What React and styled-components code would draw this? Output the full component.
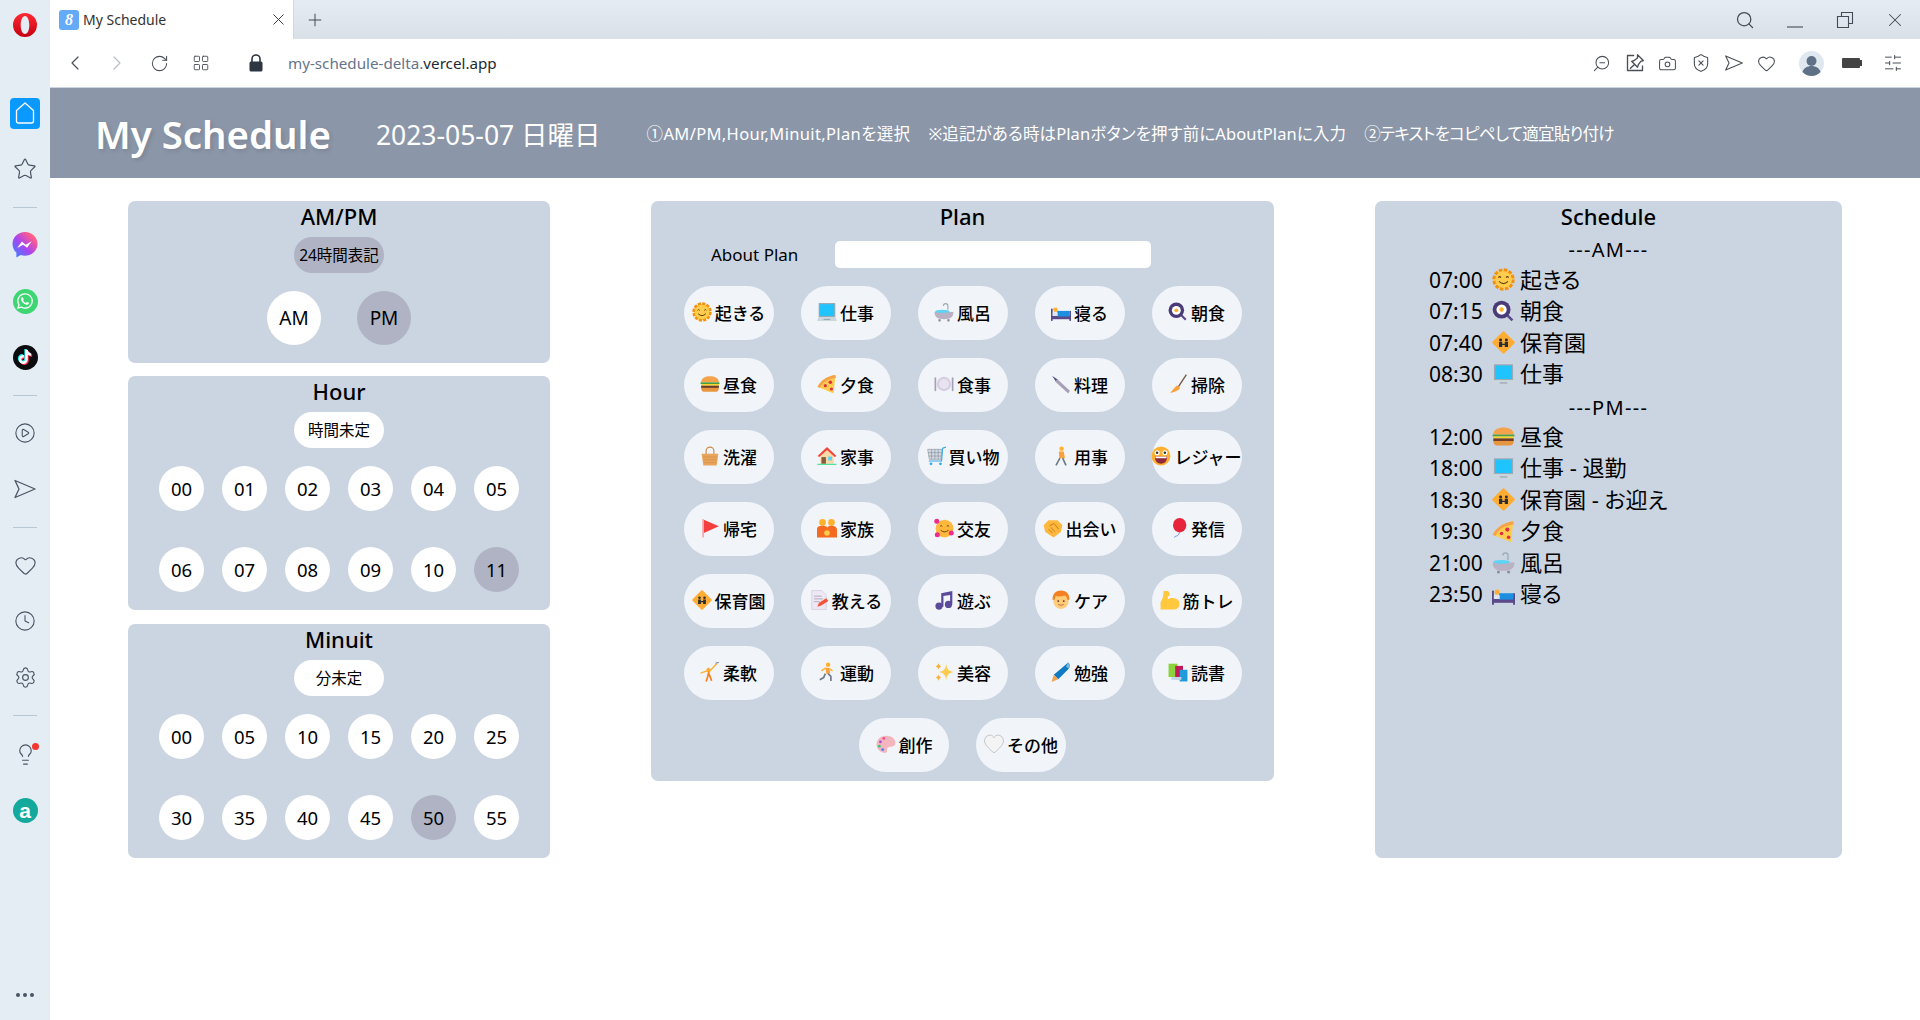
import React from 'react';
import styled, { createGlobalStyle } from 'styled-components';
import {
  X, Plus, ChevronLeft, ChevronRight, RotateCw, LayoutGrid, Search, Star, CirclePlay, Heart,
  Clock, Settings, Lightbulb, ZoomOut, Camera, ShieldX, SlidersHorizontal,
} from 'lucide-react';
import { FaWhatsapp, FaTiktok } from 'react-icons/fa';

const SANS = '"Noto Sans", "Noto Sans CJK JP", sans-serif';

const GlobalStyle = createGlobalStyle`
  html, body { margin: 0; padding: 0; height: 100%; overflow: hidden; background: #fff; }
  #root { height: 100%; }
  * { box-sizing: border-box; }
  body { font-family: ${SANS}; color: #000; font-feature-settings: "palt"; }
  button { font-feature-settings: "palt"; }
`;

const Browser = styled.div`
  display: flex;
  height: 1020px;
`;

const Sidebar = styled.aside`
  width: 50px;
  flex: none;
  background: #e4ecf4;
  display: flex;
  flex-direction: column;
  align-items: center;
  padding-bottom: 12px;
  color: #4a5563;
`;

const LogoSlot = styled.div`
  height: 50px;
  margin-bottom: 35px;
  display: flex;
  align-items: center;
  justify-content: center;
`;

const SideSlot = styled.div`
  position: relative;
  width: 50px;
  height: 56px;
  flex: none;
  display: flex;
  align-items: center;
  justify-content: center;
`;

const HomeTile = styled.div`
  width: 30px;
  height: 31px;
  border-radius: 4px;
  background: #0a9aff;
  display: flex;
  align-items: center;
  justify-content: center;
`;

const SideRule = styled.div`
  height: ${(p) => (p.$tall ? '21px' : '20px')};
  width: 24px;
  flex: none;
  display: flex;
  align-items: center;
  &::before {
    content: '';
    width: 100%;
    height: 1px;
    background: #b9c6d4;
  }
`;

const Badge = styled.span`
  position: absolute;
  top: 17px;
  left: 32px;
  width: 7px;
  height: 7px;
  border-radius: 50%;
  background: #f5372f;
`;

const AppDisc = styled.div`
  width: 25px;
  height: 25px;
  border-radius: 50%;
  display: flex;
  align-items: center;
  justify-content: center;
  color: #fff;
  background: ${(p) => p.$bg};
`;

const TikTokMark = styled(FaTiktok)`
  filter: drop-shadow(-1px -1px 0 #25f4ee) drop-shadow(1px 1px 0 #fe2c55);
`;

const AmazonLetter = styled.span`
  font: 700 21px/21px "Liberation Sans", sans-serif;
  color: #fff;
`;

const Dots = styled.div`
  margin-top: auto;
  display: flex;
  gap: 3px;
  padding-bottom: 11px;
`;

const Dot = styled.span`
  width: 4px;
  height: 4px;
  border-radius: 50%;
  background: #4a5563;
`;

const Main = styled.div`
  flex: 1;
  min-width: 0;
  display: flex;
  flex-direction: column;
`;

const TabBar = styled.div`
  height: 39px;
  flex: none;
  display: flex;
  align-items: center;
  background: linear-gradient(#e5ecf4, #d9e0e8);
  color: #444b55;
`;

const Tab = styled.div`
  width: 244px;
  height: 39px;
  background: #fff;
  display: flex;
  align-items: center;
  padding: 0 5px 0 9px;
  border-right: 1px solid #cdd8e4;
  color: #333;
  font-size: 14px;
`;

const Favicon = styled.span`
  width: 20px;
  height: 20px;
  margin-right: 4px;
  border-radius: 3px;
  background: #64aaf6;
  color: #fff;
  display: flex;
  align-items: center;
  justify-content: center;
  font: italic 700 16px/20px "Liberation Serif", serif;
`;

const TabTitle = styled.span`
  flex: 1;
`;

const NewTab = styled.div`
  width: 42px;
  display: flex;
  justify-content: center;
`;

const WindowControls = styled.div`
  margin-left: auto;
  display: flex;
`;

const WindowButton = styled.div`
  width: 50px;
  height: 39px;
  display: flex;
  align-items: center;
  justify-content: center;
`;

const AddressBar = styled.div`
  height: 49px;
  flex: none;
  display: flex;
  align-items: center;
  padding: 0 17px 0 4px;
  background: #fff;
  border-bottom: 1px solid #cbd5e1;
  color: #4a4f57;
`;

const NavButton = styled.div`
  width: 42px;
  height: 42px;
  display: flex;
  align-items: center;
  justify-content: center;
  color: ${(p) => (p.$off ? '#b8bec6' : '#4a4f57')};
`;

const LockSlot = styled.div`
  margin: 0 24px 0 26px;
  display: flex;
  color: #2c3540;
`;

const Url = styled.div`
  font-size: 15.2px;
  color: #64748b;
`;

const UrlHost = styled.span`
  color: #1f2933;
`;

const ToolGroup = styled.div`
  margin-left: auto;
  display: flex;
  align-items: center;
`;

const ToolButton = styled.div`
  width: 33px;
  height: 33px;
  display: flex;
  align-items: center;
  justify-content: center;
`;

const Mirrored = styled.span`
  display: flex;
  transform: scaleX(-1);
`;

const Avatar = styled.div`
  width: 25px;
  height: 25px;
  margin: 0 18px 0 16px;
  display: flex;
`;

const BatteryBody = styled.div`
  width: 18px;
  height: 10px;
  border-radius: 1px;
  background: #444;
`;

const BatteryNib = styled.div`
  width: 2px;
  height: 6px;
  background: #444;
  margin-right: 21px;
`;

const Header = styled.header`
  height: 90px;
  flex: none;
  display: flex;
  align-items: center;
  padding-left: 45px;
  background: #8b96a8;
  color: #fff;
`;

const Title = styled.h1`
  margin: 2px 45px 0 0;
  font-size: 38.4px;
  font-weight: 600;
  text-shadow: 2px 2px 4px rgba(0, 0, 0, 0.12);
`;

const DateText = styled.div`
  margin-right: 46px;
  font-size: 26.5px;
`;

const Notes = styled.div`
  display: flex;
  gap: 18px;
  font-size: 16.5px;
`;

const Note = styled.span`
  letter-spacing: ${(p) => p.$track}px;
`;

const Content = styled.main`
  display: flex;
  align-items: flex-start;
  justify-content: space-between;
  padding: 23px 78px 0;
`;

const LeftColumn = styled.div`
  width: 422px;
  display: flex;
  flex-direction: column;
  gap: 13px;
  & > section:last-child {
    margin-top: 1px;
  }
`;

const Panel = styled.section`
  background: #cbd5e1;
  border-radius: 7px;
  display: flex;
  flex-direction: column;
  align-items: center;
  padding-bottom: 18px;
`;

const PlanPanel = styled(Panel)`
  width: 623px;
  padding-bottom: 9px;
`;

const SchedulePanel = styled(Panel)`
  width: 467px;
  height: 657px;
`;

const PanelTitle = styled.h2`
  margin: 0;
  height: 36px;
  padding-bottom: 5px;
  font-size: 22px;
  line-height: 31px;
  font-weight: 500;
`;

const Pill = styled.button`
  width: 90px;
  height: 36px;
  margin-bottom: 18px;
  padding: 0 0 1px;
  border: none;
  border-radius: 18px;
  font: 15.500px ${SANS};
  color: #000;
  background: ${(p) => (p.$active ? '#afb3c3' : '#fff')};
`;

const MeridiemRow = styled.div`
  display: flex;
  gap: 36px;
`;

const Meridiem = styled.button`
  width: 54px;
  height: 54px;
  padding: 0;
  border: none;
  border-radius: 50%;
  font: 19px ${SANS};
  color: #000;
  background: ${(p) => (p.$active ? '#afb3c3' : '#fff')};
`;

const NumberGrid = styled.div`
  display: grid;
  grid-template-columns: repeat(6, 45px);
  gap: 36px 18px;
`;

const NumberButton = styled.button`
  width: 45px;
  height: 45px;
  padding: 0;
  border: none;
  border-radius: 50%;
  font: 18.5px ${SANS};
  color: #000;
  background: ${(p) => (p.$active ? '#afb3c3' : '#fff')};
`;

const AboutRow = styled.label`
  align-self: stretch;
  display: flex;
  align-items: center;
  gap: 37px;
  padding: 4px 0 0 60px;
  font-size: 17px;
  line-height: 27px;
`;

const AboutInput = styled.input`
  width: 316px;
  height: 27px;
  border: none;
  border-radius: 5px;
  background: #fff;
  outline: none;
`;

const PlanGrid = styled.div`
  align-self: flex-start;
  display: flex;
  flex-wrap: wrap;
  justify-content: center;
  gap: 18px 27px;
  width: 559px;
  margin: 18px 0 0 32px;
`;

const PlanButton = styled.button`
  width: 90px;
  height: 54px;
  padding: 0 0 2px;
  border: none;
  border-radius: 27px;
  background: #f1f5f9;
  display: flex;
  align-items: center;
  justify-content: center;
  gap: 3px;
  font: 500 17px ${SANS};
  color: #000;
  white-space: nowrap;
`;

const EmojiSvg = styled.svg`
  flex: none;
  width: ${(p) => p.$size}px;
  height: ${(p) => p.$size}px;
`;

const Marker = styled.div`
  font-size: 20px;
  line-height: 27px;
  letter-spacing: 1.3px;
  margin-top: ${(p) => (p.$late ? '4px' : '-1px')};
  margin-bottom: ${(p) => (p.$late ? '0' : '1px')};
`;

const ScheduleList = styled.div`
  align-self: stretch;
  padding-left: 54px;
`;

const ScheduleRow = styled.div`
  display: flex;
  align-items: center;
  height: 31.5px;
  font-size: 21px;
`;

const RowTime = styled.span`
  width: 63px;
`;

const RowLabel = styled.span`
  margin-left: 5px;
  padding-bottom: 4px;
  font-size: 22px;
`;

const emoji = {
  sun: <><circle cx="18" cy="18" r="15" fill="#FFCC4D" stroke="#F4900C" strokeWidth="5" strokeDasharray="5.500 2.350" /><circle cx="18" cy="18" r="13" fill="#FFCC4D" /><path d="M10 15q2-3 4 0M22 15q2-3 4 0M11 21q7 7 14 0" fill="none" stroke="#664500" strokeWidth="1.8" /></>,
  laptop: <><rect x="3" y="2" width="30" height="25" rx="1" fill="#9AAAB4" /><rect x="5" y="4" width="26" height="21" fill="#1FC4FF" /><path d="M3 27h30l3 7H0z" fill="#CCD6DD" /><rect x="12" y="30.500" width="12" height="1.500" fill="#8899A6" /></>,
  bath: <><path d="M25 14V7a4 4 0 0 0-8 0" fill="none" stroke="#9AAAB4" strokeWidth="2" /><path d="M1 18h34c0 9-5 13-17 13S1 27 1 18z" fill="#B9B2C4" /><ellipse cx="15" cy="17" rx="13" ry="3" fill="#5DD3F5" /><rect x="8" y="31" width="4" height="4" fill="#8E8799" /><rect x="24" y="31" width="4" height="4" fill="#8E8799" /></>,
  bed: <><rect x="0" y="12" width="3" height="22" fill="#5B4A8A" /><rect x="33" y="16" width="3" height="18" fill="#5B4A8A" /><rect x="1" y="25" width="34" height="6" fill="#5B4A8A" /><path d="M11 16h22v10H11z" fill="#1C8FE0" /><rect x="3" y="19" width="9" height="6" fill="#DDE6EE" /><circle cx="8" cy="14" r="4" fill="#FFB02E" /></>,
  pan: <><path d="m24 24 8 8" stroke="#5B4A8A" strokeWidth="4" /><circle cx="15" cy="15" r="14" fill="#4B3A78" /><circle cx="15" cy="15" r="8" fill="#fff" /><circle cx="15" cy="15" r="3.500" fill="#FFB02E" /></>,
  burger: <><path d="M2 15C2 7 10 4 18 4s16 3 16 11z" fill="#F4A24B" /><rect x="1" y="15" width="34" height="3" fill="#4A9D3B" /><rect x="2" y="18" width="32" height="3" fill="#F8D22E" /><rect x="2" y="21" width="32" height="4" fill="#6D3B22" /><path d="M2 25h32c0 5-3 7-6 7H8c-3 0-6-2-6-7z" fill="#E8953F" /></>,
  pizza: <><path d="M33 2C18 4 7 12 1 23l29 12z" fill="#FFCC4D" /><path d="M33 2C18 4 7 12 1 23l4 2C11 14 19 9 34 7z" fill="#F4A24B" /><circle cx="24" cy="15" r="3.200" fill="#DD2E44" /><circle cx="15" cy="21" r="2.800" fill="#DD2E44" /><circle cx="26" cy="27" r="2.800" fill="#DD2E44" /></>,
  plate: <><circle cx="18" cy="18" r="13" fill="#D6CFE2" /><circle cx="18" cy="18" r="9" fill="#E8E3F0" /><rect x="1" y="6" width="3" height="25" rx="1.500" fill="#A79FB5" /><rect x="32" y="6" width="3" height="25" rx="1.500" fill="#A79FB5" /></>,
  knife: <><path d="M2 3 12 10l-3 4z" fill="#5B4A8A" /><path d="m11 9 23 21-3 5L8 14z" fill="#A79FB5" /></>,
  broom: <><path d="m33 1-15 23" stroke="#7A5B45" strokeWidth="2.500" /><path d="M15 21c5 0 7 3 6 6-4 3-9 6-17 7 2-3 7-8 11-13z" fill="#F9A23B" /></>,
  basket: <><path d="M11 15V9a7 7 0 0 1 14 0v6" fill="none" stroke="#C98A45" strokeWidth="2" /><path d="M3 14h30l-3 21H6z" fill="#E8A55B" /><path d="M5 20h26M6 25h24M7 30h22" stroke="#C98A45" /></>,
  house: <><path d="M6 16 18 5l12 11v16H6z" fill="#F9D9A8" /><path d="M18 2 1 18l3 2L18 7l14 13 3-2z" fill="#F44336" /><rect x="8" y="20" width="8" height="12" fill="#8A5A3C" /><rect x="20" y="19" width="7" height="7" fill="#5DD3F5" /><rect x="1" y="32" width="34" height="2" fill="#3EE08F" /></>,
  cart: <><path d="M3 6h26l-2 18H6z" fill="#D3D9E0" stroke="#7D8894" /><path d="M10 6v18M16 6v18M22 6v18M4 12h24M5 18h22" stroke="#7D8894" /><path d="m36 2-6 2-2 23H5" fill="none" stroke="#3AA7E0" strokeWidth="2" /><circle cx="9" cy="32" r="2.500" fill="#3AA7E0" /><circle cx="26" cy="32" r="2.500" fill="#3AA7E0" /></>,
  walk: <><circle cx="19" cy="5" r="4" fill="#FFB02E" /><path d="M14 10h9l2 12h-10z" fill="#F9A23B" /><path d="m16 22-7 13M21 22l6 13" stroke="#6D7B8A" strokeWidth="3" /></>,
  grin: <><circle cx="18" cy="18" r="17" fill="#FFB02E" /><circle cx="11" cy="12" r="4.500" fill="#fff" /><circle cx="25" cy="12" r="4.500" fill="#fff" /><circle cx="11" cy="12" r="2.200" fill="#333" /><circle cx="25" cy="12" r="2.200" fill="#333" /><path d="M7 19h22c0 9-5 13-11 13S7 28 7 19z" fill="#8F2A3C" /><rect x="8" y="19" width="20" height="3" fill="#fff" /></>,
  flag: <><rect x="4" y="2" width="3" height="33" fill="#F4A8A8" /><path d="M7 3 34 15 7 27z" fill="#F43F3F" /></>,
  family: <><circle cx="10" cy="8" r="6" fill="#FFB02E" /><circle cx="26" cy="8" r="6" fill="#FFB02E" /><path d="M0 35V20q0-6 10-6t8 6q0-6 8-6t10 6v15z" fill="#F46A1F" /><circle cx="18" cy="27" r="5" fill="#FFCC4D" /></>,
  hearts: <><circle cx="19" cy="19" r="16" fill="#FFB83D" /><path d="M11 15q2-3 4 0M23 15q2-3 4 0M12 22q7 6 14 0" fill="none" stroke="#664500" strokeWidth="1.800" /><circle cx="5" cy="6" r="4.500" fill="#EF2C8B" /><circle cx="31" cy="27" r="4.500" fill="#EF2C8B" /><circle cx="6" cy="30" r="4.500" fill="#EF2C8B" /></>,
  shake: <><path d="M1 13 10 4h16l9 9-3 12-13 10L4 25z" fill="#FFB83D" /><path d="m12 14 8-4 8 10M10 20l7 7M14 17l8 8" fill="none" stroke="#C47F12" strokeWidth="1.800" /></>,
  balloon: <><ellipse cx="21" cy="13" rx="12" ry="13" fill="#E8243C" /><path d="m21 26-2 4c-2 3-6 2-8 5" fill="none" stroke="#5C7CE0" strokeWidth="1.500" /></>,
  school: <><rect x="5" y="5" width="26" height="26" rx="2" transform="rotate(45 18 18)" fill="#FFAC33" /><circle cx="13.500" cy="14" r="2.300" fill="#292F33" /><circle cx="22.500" cy="14" r="2.300" fill="#292F33" /><path d="M11 17h5v8h-5zM20 17h5v8h-5zM14 20h8v2h-8z" fill="#292F33" /></>,
  memo: <><path d="M5 1h18l8 8v26H5z" fill="#EEE8F4" stroke="#C9BFD6" /><path d="M9 11h14M9 16h16M9 21h10" stroke="#A79FB5" strokeWidth="1.500" /><path d="m15 30 3-7 13-8 4 5-13 8z" fill="#F4553A" /></>,
  music: <><path d="M13 6 33 2v24h-4V9l-12 2v19h-4z" fill="#5B4A9A" /><circle cx="9" cy="29" r="6.500" fill="#5B4A9A" /><circle cx="26" cy="26" r="6.500" fill="#5B4A9A" /></>,
  face: <><circle cx="18" cy="20" r="14" fill="#FFCC7A" /><path d="M3 18C2 6 10 1 18 1s16 5 15 17l-4-1c0-4-2-6-5-7-5 2-13 2-16 1-1 2-1 4-1 6z" fill="#F4801F" /><circle cx="13" cy="20" r="1.700" fill="#60352A" /><circle cx="23" cy="20" r="1.700" fill="#60352A" /><path d="M13 26q5 3 10 0" fill="none" stroke="#B5603A" strokeWidth="1.500" /></>,
  muscle: <><path d="M1 35V22C5 16 7 8 6 2h9l3 7-4 3v5c6-4 16-3 20 3 3 8-1 15-8 15z" fill="#FFC83D" /></>,
  cartwheel: <><circle cx="15" cy="14" r="3.500" fill="#FFB02E" /><path d="M1 20 13 16l3 2 14-15" fill="none" stroke="#FFB02E" strokeWidth="2.500" /><path d="M16 17 14 26l-3 9M16 21l5 13" stroke="#F4801F" strokeWidth="3" /><path d="M28 2 34 1" stroke="#7D8894" strokeWidth="2" /></>,
  runner: <><circle cx="20" cy="5" r="4" fill="#FFB02E" /><path d="m15 10 7 1 2 9-7 2z" fill="#F9A23B" /><path d="m15 21-3 7-7 4M20 21l5 5v8" fill="none" stroke="#6D7B8A" strokeWidth="3" /><path d="m15 11-7 5M22 12l6 4" stroke="#FFB02E" strokeWidth="2.500" /></>,
  sparkle: <><path d="M22 3c1 9 4 13 13 15-9 2-12 6-13 15-1-9-4-13-13-15 9-2 12-6 13-15z" fill="#FFCC4D" /><path d="M8 2c.5 3 2 5 5 6-3 1-4.500 3-5 6-.5-3-2-5-5-6 3-1 4.500-3 5-6zM8 22c.5 3 2 5 5 6-3 1-4.500 3-5 6-.5-3-2-5-5-6 3-1 4.500-3 5-6z" fill="#FFAC33" /></>,
  pen: <><path d="M31 1c4 3 3 8 1 11L13 31l-8-8z" fill="#0F7BC4" /><path d="m5 23 8 8-12 5z" fill="#F4A24B" /><path d="M31 1c4 3 3 8 1 11l-5-4z" fill="#7DB7DE" /></>,
  books: <><rect x="1" y="3" width="16" height="24" fill="#8CD23C" /><rect x="13" y="7" width="14" height="24" fill="#C2185B" /><rect x="21" y="14" width="14" height="21" fill="#1E9BD8" /><rect x="6" y="27" width="18" height="5" fill="#BFD7E8" /></>,
  palette: <><path d="M18 3C8 3 1 10 1 19s8 15 15 15c5 0 4-5 4-7s2-4 6-4c6 0 9-3 9-7C35 8 28 3 18 3z" fill="#F4B6BE" /><circle cx="8" cy="14" r="2.500" fill="#A64DD6" /><circle cx="6" cy="22" r="2.500" fill="#3EC46D" /><circle cx="12" cy="28" r="2.500" fill="#3B82F6" /><circle cx="14" cy="8" r="2.500" fill="#F4508B" /></>,
  white: <><path d="M18 34C8 26 1 19 1 12 1 6 6 2 11 2c3 0 6 2 7 5 1-3 4-5 7-5 5 0 10 4 10 10 0 7-7 14-17 22z" fill="#F4F4F4" stroke="#B8BCC2" strokeWidth="1.500" /></>,
};

const Emoji = ({ name, size }) => (
  <EmojiSvg $size={size} viewBox="0 0 36 36">{emoji[name]}</EmojiSvg>
);

const plans = [
  ['sun', '起きる'], ['laptop', '仕事'], ['bath', '風呂'], ['bed', '寝る'], ['pan', '朝食'],
  ['burger', '昼食'], ['pizza', '夕食'], ['plate', '食事'], ['knife', '料理'], ['broom', '掃除'],
  ['basket', '洗濯'], ['house', '家事'], ['cart', '買い物'], ['walk', '用事'], ['grin', 'レジャー'],
  ['flag', '帰宅'], ['family', '家族'], ['hearts', '交友'], ['shake', '出会い'], ['balloon', '発信'],
  ['school', '保育園'], ['memo', '教える'], ['music', '遊ぶ'], ['face', 'ケア'], ['muscle', '筋トレ'],
  ['cartwheel', '柔軟'], ['runner', '運動'], ['sparkle', '美容'], ['pen', '勉強'], ['books', '読書'],
  ['palette', '創作'], ['white', 'その他'],
];

const amRows = [
  ['07:00', 'sun', '起きる'],
  ['07:15', 'pan', '朝食'],
  ['07:40', 'school', '保育園'],
  ['08:30', 'laptop', '仕事'],
];

const pmRows = [
  ['12:00', 'burger', '昼食'],
  ['18:00', 'laptop', '仕事 - 退勤'],
  ['18:30', 'school', '保育園 - お迎え'],
  ['19:30', 'pizza', '夕食'],
  ['21:00', 'bath', '風呂'],
  ['23:50', 'bed', '寝る'],
];

const hours = ['00', '01', '02', '03', '04', '05', '06', '07', '08', '09', '10', '11'];
const minutes = ['00', '05', '10', '15', '20', '25', '30', '35', '40', '45', '50', '55'];

const SendIcon = ({ size }) => (
  <svg width={size} height={size} viewBox="0 0 24 24" fill="none" stroke="currentColor" strokeWidth="1.3" strokeLinejoin="round">
    <path d="M2 3.500 22 12 2 20.500 6 12z" />
  </svg>
);

const OperaLogo = () => (
  <svg width="26" height="26" viewBox="0 0 26 26">
    <defs>
      <linearGradient id="opera" x1="0" y1="0" x2="0" y2="1">
        <stop offset="0" stopColor="#ff2a35" />
        <stop offset="1" stopColor="#c5000f" />
      </linearGradient>
    </defs>
    <path fillRule="evenodd" fill="url(#opera)" d="M13 1a12 12 0 1 0 0 24 12 12 0 0 0 0-24zm0 3c2.600 0 4.300 4 4.300 9s-1.700 9-4.300 9-4.300-4-4.300-9 1.700-9 4.300-9z" />
  </svg>
);

const MessengerIcon = () => (
  <svg width="26" height="26" viewBox="0 0 25 25">
    <defs>
      <linearGradient id="msgr" x1="0" y1="1" x2="1" y2="0">
        <stop offset="0" stopColor="#2e8bff" />
        <stop offset="0.45" stopColor="#a845f0" />
        <stop offset="0.8" stopColor="#ff5c8a" />
        <stop offset="1" stopColor="#ff8a5c" />
      </linearGradient>
    </defs>
    <path fill="url(#msgr)" d="M12.500 0C5.700 0 .5 5 .5 11.500c0 3.400 1.400 6.300 3.700 8.300v4.700l4.200-2.300c1.300.4 2.700.6 4.100.6 6.800 0 12-5 12-11.300S19.300 0 12.500 0z" />
    <path fill="#fff" d="m5 15.500 4.500-6.300 3.700 3 5.800-3.300-4.500 6.300-3.700-3z" />
  </svg>
);

const LockIcon = () => (
  <svg width="16" height="18" viewBox="0 0 16 18">
    <path d="M4 8V5a4 4 0 0 1 8 0v3" fill="none" stroke="currentColor" strokeWidth="1.600" />
    <rect x="1.500" y="7.500" width="13" height="10" rx="1.500" fill="currentColor" />
  </svg>
);

const SnapIcon = () => (
  <svg width="20" height="20" viewBox="0 0 24 24" fill="none" stroke="currentColor" strokeWidth="1.600" strokeLinejoin="round">
    <path d="M11 3H3v18h18v-6" />
    <path d="m15 2 7 7-3 1-3 4-1 3-7-7 3-1 4-3zM11 14l-5 5" />
  </svg>
);

const AvatarIcon = () => (
  <svg width="25" height="25" viewBox="0 0 25 25">
    <circle cx="12.500" cy="12.500" r="12.500" fill="#dfe7f0" />
    <circle cx="12.500" cy="10" r="5" fill="#5f7186" />
    <path d="M3.500 21c1-4 5-6 9-6s8 2 9 6c-2.500 2.500-5.500 4-9 4s-6.500-1.500-9-4z" fill="#5f7186" />
  </svg>
);

const HomeIcon = () => (
  <svg width="22" height="24" viewBox="0 0 22 24" fill="none" stroke="#fff" strokeWidth="1.300" strokeLinejoin="round">
    <path d="M11 2 2.500 9.500V20a2 2 0 0 0 2 2h13a2 2 0 0 0 2-2V9.500z" />
  </svg>
);

const NumberPanel = ({ title, pill, values, active }) => (
  <Panel>
    <PanelTitle>{title}</PanelTitle>
    <Pill>{pill}</Pill>
    <NumberGrid>
      {values.map((v) => (
        <NumberButton key={v} $active={v === active}>{v}</NumberButton>
      ))}
    </NumberGrid>
  </Panel>
);

const Rows = ({ rows }) => (
  <ScheduleList>
    {rows.map(([time, icon, label]) => (
      <ScheduleRow key={time}>
        <RowTime>{time}</RowTime>
        <Emoji name={icon} size={23} />
        <RowLabel>{label}</RowLabel>
      </ScheduleRow>
    ))}
  </ScheduleList>
);

export default function App() {
  return (
    <Browser>
      <GlobalStyle />
      <Sidebar>
        <LogoSlot><OperaLogo /></LogoSlot>
        <SideSlot><HomeTile><HomeIcon /></HomeTile></SideSlot>
        <SideSlot><Star size={24} strokeWidth={1.2} /></SideSlot>
        <SideRule />
        <SideSlot><MessengerIcon /></SideSlot>
        <SideSlot><AppDisc $bg="#3dd672"><FaWhatsapp size={18} /></AppDisc></SideSlot>
        <SideSlot><AppDisc $bg="#0b0b0f"><TikTokMark size={14} /></AppDisc></SideSlot>
        <SideRule />
        <SideSlot><CirclePlay size={22} strokeWidth={1.2} /></SideSlot>
        <SideSlot><SendIcon size={24} /></SideSlot>
        <SideRule />
        <SideSlot><Heart size={23} strokeWidth={1.2} /></SideSlot>
        <SideSlot><Clock size={22} strokeWidth={1.2} /></SideSlot>
        <SideSlot><Settings size={23} strokeWidth={1.2} /></SideSlot>
        <SideRule $tall />
        <SideSlot><Lightbulb size={23} strokeWidth={1.2} /><Badge /></SideSlot>
        <SideSlot><AppDisc $bg="#13a99c"><AmazonLetter>a</AmazonLetter></AppDisc></SideSlot>
        <Dots><Dot /><Dot /><Dot /></Dots>
      </Sidebar>
      <Main>
        <TabBar>
          <Tab>
            <Favicon>8</Favicon>
            <TabTitle>My Schedule</TabTitle>
            <X size={19} strokeWidth={1.2} />
          </Tab>
          <NewTab><Plus size={20} strokeWidth={1.2} /></NewTab>
          <WindowControls>
            <WindowButton><Search size={20} strokeWidth={1.5} /></WindowButton>
            <WindowButton><svg width="18" height="18" viewBox="0 0 18 18" stroke="currentColor" strokeWidth="1.100"><path d="M1 16h16" /></svg></WindowButton>
            <WindowButton><svg width="18" height="18" viewBox="0 0 18 18" fill="none" stroke="currentColor" strokeWidth="1.100"><path d="M1.500 5.500h11v11h-11zM5.500 5V1.500h11v11H13" /></svg></WindowButton>
            <WindowButton><X size={22} strokeWidth={1.1} /></WindowButton>
          </WindowControls>
        </TabBar>
        <AddressBar>
          <NavButton><ChevronLeft size={24} strokeWidth={1.2} /></NavButton>
          <NavButton $off><ChevronRight size={24} strokeWidth={1.2} /></NavButton>
          <NavButton><RotateCw size={19} strokeWidth={1.3} /></NavButton>
          <NavButton><LayoutGrid size={18} strokeWidth={1.2} /></NavButton>
          <LockSlot><LockIcon /></LockSlot>
          <Url>my-schedule-delta.<UrlHost>vercel.app</UrlHost></Url>
          <ToolGroup>
            <ToolButton><Mirrored><ZoomOut size={19} strokeWidth={1.3} /></Mirrored></ToolButton>
            <ToolButton><SnapIcon /></ToolButton>
            <ToolButton><Camera size={19} strokeWidth={1.3} /></ToolButton>
            <ToolButton><ShieldX size={20} strokeWidth={1.3} /></ToolButton>
            <ToolButton><SendIcon size={20} /></ToolButton>
            <ToolButton><Heart size={19} strokeWidth={1.3} /></ToolButton>
            <Avatar><AvatarIcon /></Avatar>
            <BatteryBody />
            <BatteryNib />
            <SlidersHorizontal size={20} strokeWidth={1.2} />
          </ToolGroup>
        </AddressBar>
        <Header>
          <Title>My Schedule</Title>
          <DateText>2023-05-07 日曜日</DateText>
          <Notes>
            <Note $track={0.35}>①AM/PM,Hour,Minuit,Planを選択</Note>
            <Note $track={0.12}>※追記がある時はPlanボタンを押す前にAboutPlanに入力</Note>
            <Note $track={-0.7}>②テキストをコピペして適宜貼り付け</Note>
          </Notes>
        </Header>
        <Content>
          <LeftColumn>
            <Panel>
              <PanelTitle>AM/PM</PanelTitle>
              <Pill $active>24時間表記</Pill>
              <MeridiemRow>
                <Meridiem>AM</Meridiem>
                <Meridiem $active>PM</Meridiem>
              </MeridiemRow>
            </Panel>
            <NumberPanel title="Hour" pill="時間未定" values={hours} active="11" />
            <NumberPanel title="Minuit" pill="分未定" values={minutes} active="50" />
          </LeftColumn>
          <PlanPanel>
            <PanelTitle>Plan</PanelTitle>
            <AboutRow>
              About Plan
              <AboutInput type="text" />
            </AboutRow>
            <PlanGrid>
              {plans.map(([icon, label]) => (
                <PlanButton key={label}>
                  <Emoji name={icon} size={20} />
                  {label}
                </PlanButton>
              ))}
            </PlanGrid>
          </PlanPanel>
          <SchedulePanel>
            <PanelTitle>Schedule</PanelTitle>
            <Marker>---AM---</Marker>
            <Rows rows={amRows} />
            <Marker $late>---PM---</Marker>
            <Rows rows={pmRows} />
          </SchedulePanel>
        </Content>
      </Main>
    </Browser>
  );
}
